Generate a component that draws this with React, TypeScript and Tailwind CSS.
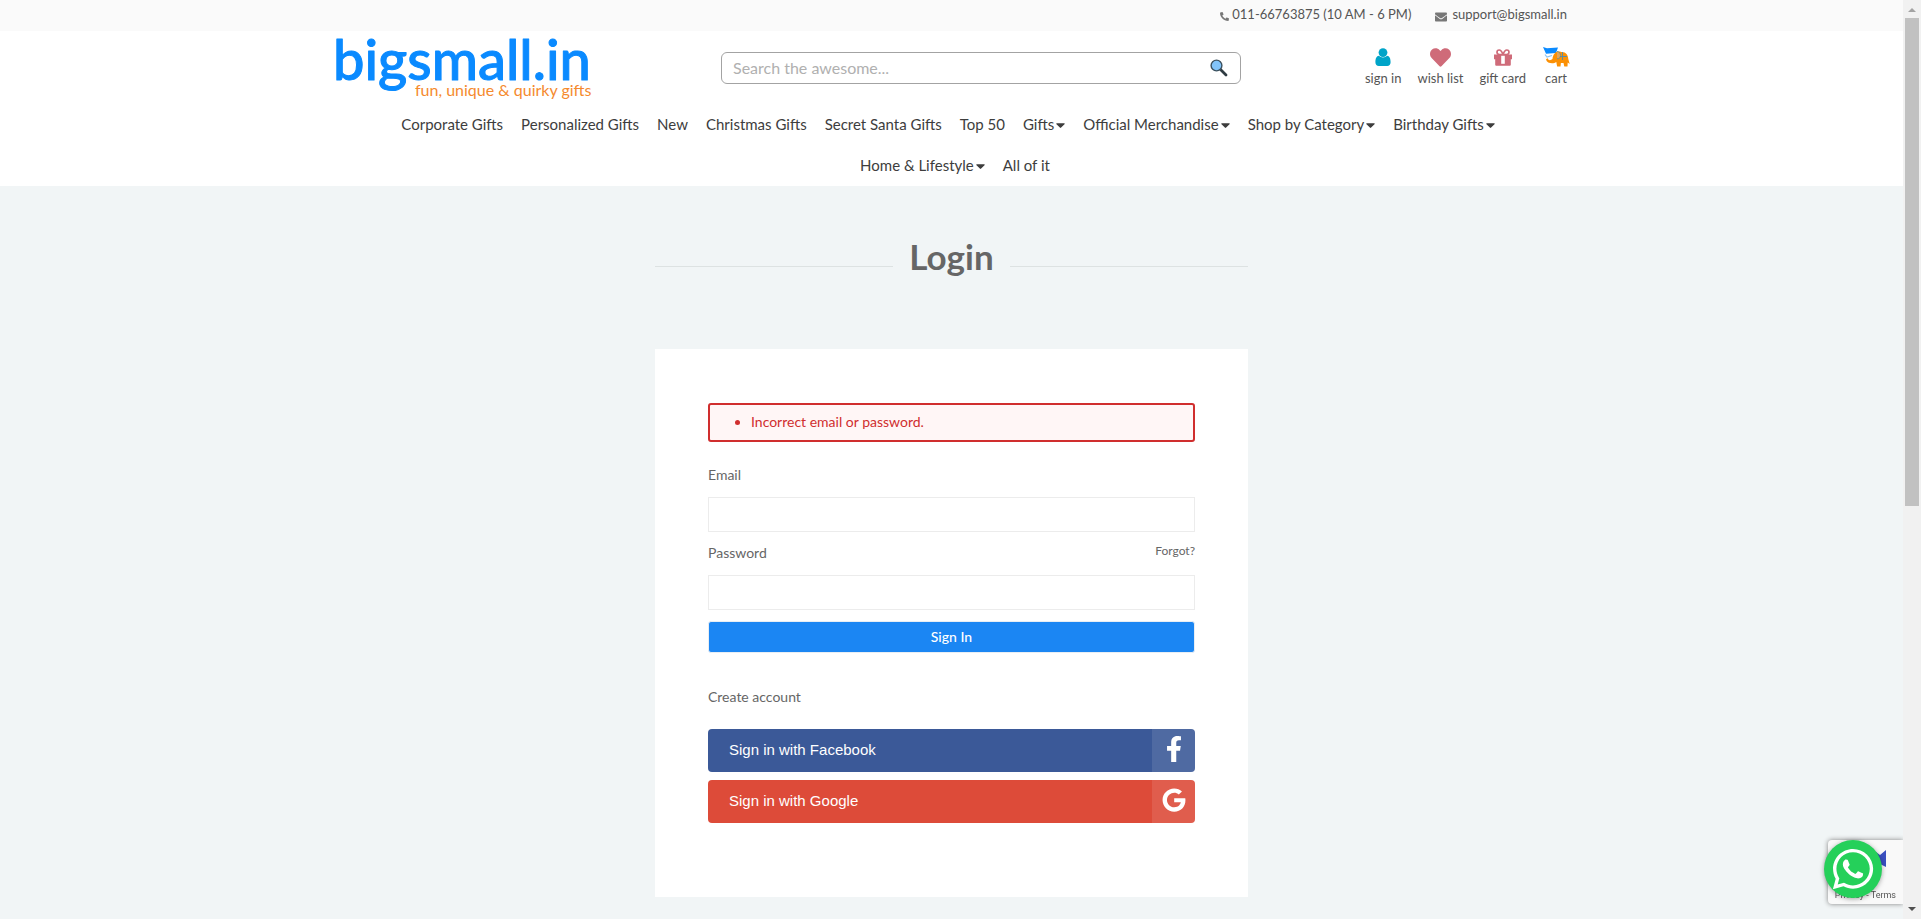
import type { ReactNode } from "react";
import {
  FaCaretDown,
  FaEnvelope,
  FaFacebookF,
  FaGoogle,
  FaHeart,
  FaPhone,
  FaWhatsapp,
} from "react-icons/fa";

type NavItem = { label: string; menu?: boolean };

const firstRow: NavItem[] = [
  { label: "Corporate Gifts" },
  { label: "Personalized Gifts" },
  { label: "New" },
  { label: "Christmas Gifts" },
  { label: "Secret Santa Gifts" },
  { label: "Top 50" },
  { label: "Gifts", menu: true },
  { label: "Official Merchandise", menu: true },
  { label: "Shop by Category", menu: true },
  { label: "Birthday Gifts", menu: true },
];

const secondRow: NavItem[] = [
  { label: "Home & Lifestyle", menu: true },
  { label: "All of it" },
];

function Logo() {
  return (
    <a href="#" aria-label="bigsmall.in home" className="block w-[256px]">
      <svg viewBox="0 0 256 68" className="h-[68px] w-[256px] overflow-visible" fontFamily="Lato, sans-serif">
        <text
          x="-3"
          y="45"
          fontSize="56"
          fontWeight="500"
          fill="#0a8aff"
          stroke="#0a8aff"
          strokeWidth="1"
          strokeLinejoin="round"
        >
          bigsmall.in
        </text>
        <text x="79" y="61" fontSize="16" fill="#f58a2e">
          fun, unique &amp; quirky gifts
        </text>
      </svg>
    </a>
  );
}

function SearchIcon() {
  return (
    <svg viewBox="0 0 20 20" className="size-5">
      <path d="M11.5 11.5 17 17" stroke="#2f3b42" strokeWidth="2.8" strokeLinecap="round" />
      <circle cx="7.5" cy="7.5" r="5.4" fill="#82c4fa" stroke="#3c5260" strokeWidth="1.4" />
    </svg>
  );
}

function UserIcon() {
  return (
    <svg viewBox="0 0 16 18" className="h-[18px] w-4" fill="#00a4c8">
      <circle cx="8" cy="4.6" r="4.4" />
      <path d="M4 7.8C1.4 8 .4 10.600.4 14.200.4 16.600 1.800 18 3.800 18h8.400c2 0 3.400-1.400 3.400-3.800C15.600 10.600 14.600 8 12 7.800 10.900 8.900 9.500 9.500 8 9.500S5.100 8.900 4 7.800z" />
    </svg>
  );
}

function GiftIcon() {
  return (
    <svg viewBox="0 0 18 17" className="h-[17px] w-[18px]">
      <path d="M0 5.500h18v4.800h-1.200V15.500c0 .8-.5 1.300-1.300 1.300h-13c-.8 0-1.300-.5-1.300-1.300V10.300H0z" fill="#cf6b79" />
      <path d="M9 5.500C8 2.800 6.800 1 5.200 1 3.900 1 3 1.900 3 3.200s1 2.300 2.400 2.300zM9 5.500C10 2.800 11.200 1 12.800 1 14.100 1 15 1.900 15 3.200s-1 2.300-2.400 2.300z" fill="none" stroke="#cf6b79" strokeWidth="1.700" />
      <path d="M7.200 6.800h3.600v8H7.200z" fill="#fff" />
    </svg>
  );
}

function CartIcon() {
  return (
    <svg viewBox="0 0 28 22" className="h-[22px] w-7">
      <path d="M1 1l4 1.300L16 1.500l-2 5.500-10 .8z" fill="#0a8aff" />
      <path d="M3 8.500l2 2.500 5-1.500" stroke="#8cc4f5" strokeWidth="1.200" fill="none" />
      <path
        d="M5.500 12c.5 2.500 3 2.800 5 1 .3-4 2.700-7.500 6.500-7.500 1.300 0 2 .5 3 .5 4 0 6 3 6.300 7l1.400 5-2-1.500-.2 4h-3.200l-.8-3.500h-2.600l-.4 3.500h-3.400l-.8-4.500c-3 2.500-9.300 1.500-10.300-2.500z"
        fill="#fb9004"
      />
      <path d="M15 5.500c2 0 3.500 1.500 3.500 4s-1.500 3.500-3.500 3.200" fill="#e5a455" stroke="#6d8c8c" strokeWidth=".900" />
      <path d="M20.500 6v8M18 10.500h7" stroke="#5a8ca0" strokeWidth="1" />
    </svg>
  );
}

function QuickLink({ label, children }: { label: string; children: ReactNode }) {
  return (
    <a href="#" className="flex flex-col items-center text-[13px] leading-5 text-[#555]">
      <span className="flex h-[22px] items-center">{children}</span>
      {label}
    </a>
  );
}

function NavRow({ items }: { items: NavItem[] }) {
  return (
    <ul className="flex flex-wrap justify-center gap-x-[18px]">
      {items.map((item) => (
        <li key={item.label}>
          <a href="#" className="flex items-center gap-[2px] text-[15px] leading-[41px] text-[#3d3d3d]">
            {item.label}
            {item.menu && <FaCaretDown className="h-4 w-[9px]" />}
          </a>
        </li>
      ))}
    </ul>
  );
}

function SocialButton({ label, tone, children }: { label: string; tone: string; children: ReactNode }) {
  return (
    <button
      type="button"
      className={`flex h-[43px] w-full items-stretch overflow-hidden rounded text-left font-['Liberation_Sans',Arial,sans-serif] text-[15px] text-white ${tone}`}
    >
      <span className="flex-1 pl-[21px] leading-[41px]">{label}</span>
      <span className="flex w-[43px] items-center justify-center bg-white/10">{children}</span>
    </button>
  );
}

export default function App() {
  return (
    <div className="min-h-screen bg-[#f1f5f6] pr-[18px] font-[Lato,sans-serif] text-[#666]">
      <div className="bg-[#fafafa]">
        <div className="mx-auto flex h-[31px] max-w-[1231px] items-start justify-end gap-6 text-[13px] leading-[29px] text-[#555]">
          <a href="tel:01166763875" className="flex items-center gap-[3px]">
            <FaPhone className="mt-1 size-[9px] -scale-x-100 text-[#777]" />
            011-66763875 (10 AM - 6 PM)
          </a>
          <a href="mailto:support@bigsmall.in" className="flex items-center gap-[5px]">
            <FaEnvelope className="mt-1 size-3 text-[#777]" />
            support@bigsmall.in
          </a>
        </div>
      </div>

      <header className="bg-white">
        <div className="mx-auto flex h-[73px] max-w-[1237px] items-start pl-[3px]">
          <div className="pt-1">
            <Logo />
          </div>
          <form className="mt-[21px] ml-[129px] flex h-8 w-[520px] items-center rounded-md border border-[#a3a3a3] bg-white px-[11px]">
            <input
              aria-label="Search"
              placeholder="Search the awesome..."
              className="min-w-0 flex-1 bg-transparent text-base text-[#555] outline-none placeholder:text-[#b0b0b0]"
            />
            <button type="button" aria-label="Submit search">
              <SearchIcon />
            </button>
          </form>
          <div className="ml-auto flex gap-4 pt-[15px]">
            <QuickLink label="sign in">
              <UserIcon />
            </QuickLink>
            <QuickLink label="wish list">
              <FaHeart className="size-[21px] text-[#cf6b79]" />
            </QuickLink>
            <QuickLink label="gift card">
              <GiftIcon />
            </QuickLink>
            <QuickLink label="cart">
              <CartIcon />
            </QuickLink>
          </div>
        </div>
        <nav aria-label="Main">
          <div className="pr-[7px]">
            <NavRow items={firstRow} />
          </div>
          <div className="pl-[7px]">
            <NavRow items={secondRow} />
          </div>
        </nav>
      </header>

      <main className="mx-auto max-w-[593px] pb-[22px]">
        <div className="flex items-center gap-4 pt-[45px]">
          <span className="mt-5 h-px flex-1 bg-[#dde2e2]" />
          <h1 className="text-[35px] leading-[50px] font-bold text-[#666]">Login</h1>
          <span className="mt-5 h-px flex-1 bg-[#dde2e2]" />
        </div>

        <section className="mt-[68px] bg-white px-[53px] pt-[54px] pb-[74px]">
          <ul className="list-disc rounded-[3px] border-2 border-[#d02e2e] bg-[#fff6f6] pt-[7px] pb-[9px] pl-[41px] text-sm leading-[19px] text-[#d02e2e]">
            <li>Incorrect email or password.</li>
          </ul>
          <form>
            <label htmlFor="email" className="mt-[22px] block text-sm leading-[22px]">
              Email
            </label>
            <input id="email" type="email" className="mt-[11px] block h-[35px] w-full border border-[#ececec] px-2 text-sm" />
            <div className="mt-[10px] flex items-start justify-between">
              <label htmlFor="password" className="text-sm leading-[22px]">
                Password
              </label>
              <a href="#" className="text-xs leading-[18px]">
                Forgot?
              </a>
            </div>
            <input id="password" type="password" className="mt-[11px] block h-[35px] w-full border border-[#ececec] px-2 text-sm" />
            <button
              type="button"
              className="mt-[11px] block h-8 w-full rounded-[3px] border border-[#e8eef4] bg-[#1b86f3] text-sm font-medium text-white"
            >
              Sign In
            </button>
          </form>
          <a href="#" className="mt-[33px] block text-sm leading-[22px]">
            Create account
          </a>
          <div className="mt-[21px] flex flex-col gap-2">
            <SocialButton label="Sign in with Facebook" tone="bg-[#3b5998]">
              <FaFacebookF className="mb-[3px] size-[26px]" />
            </SocialButton>
            <SocialButton label="Sign in with Google" tone="bg-[#dd4b39]">
              <FaGoogle className="mb-[3px] size-6" />
            </SocialButton>
          </div>
        </section>
      </main>

      <aside className="fixed right-[18px] bottom-[15px] flex h-16 w-[75px] items-end justify-end rounded-l-sm bg-[#f9f9f9] pr-[7px] shadow-[0_0_5px_gray]">
        <svg viewBox="0 0 10 18" className="absolute top-[10px] right-[17px] h-[18px] w-[10px]">
          <path d="M0 2l4 3 6-5v17l-4-2-6-3z" fill="#3a4fc0" />
        </svg>
        <p className="font-[Roboto,sans-serif] text-[9px] leading-[18px] whitespace-nowrap text-[#555]">
          <a href="#">Privacy</a> - <a href="#">Terms</a>
        </p>
        <a
          href="#"
          aria-label="Chat on WhatsApp"
          className="absolute top-0 -left-1 flex size-[58px] items-center justify-center rounded-full bg-[#25d05a] text-white shadow-[0_1px_5px_rgba(0,0,0,0.35)]"
        >
          <FaWhatsapp className="size-[46px]" />
        </a>
      </aside>

      <div aria-hidden="true" className="fixed inset-y-0 right-0 flex w-[18px] flex-col items-center bg-[#f1f1f1]">
        <svg viewBox="0 0 18 18" className="h-[18px] w-[18px]">
          <path d="M5 12h8L9 8z" fill="#a3a3a3" />
        </svg>
        <div className="h-[488px] w-[14px] bg-[#c1c1c1]" />
        <svg viewBox="0 0 18 18" className="mt-auto h-[18px] w-[18px]">
          <path d="M5 6h8l-4 4z" fill="#505050" />
        </svg>
      </div>
    </div>
  );
}
